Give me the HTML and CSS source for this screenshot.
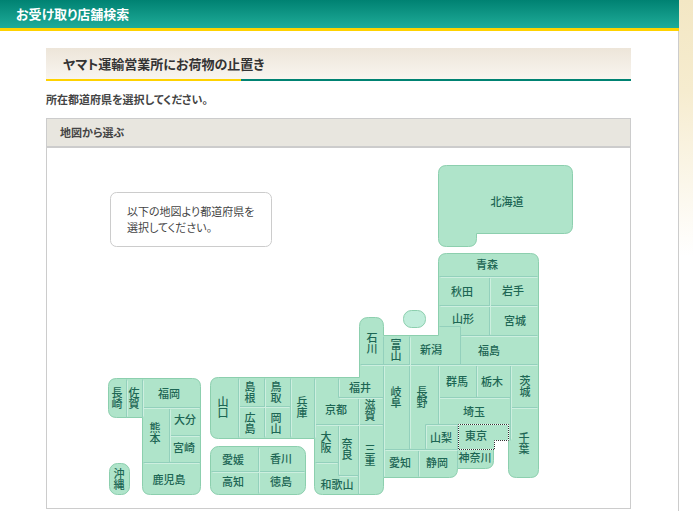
FILE: index.html
```html
<!DOCTYPE html>
<html lang="ja">
<head>
<meta charset="utf-8">
<meta name="viewport" content="width=device-width, initial-scale=1">
<title>お受け取り店舗検索</title>
<link rel="stylesheet" href="styles.css">
</head>
<body>
<div class="page">
  <header class="site-header"><h1>お受け取り店舗検索</h1></header>
  <main class="content">
    <h2 class="section-title">ヤマト運輸営業所にお荷物の止置き</h2>
    <p class="lead">所在都道府県を選択してください。</p>
    <section class="panel">
      <h3 class="panel-title">地図から選ぶ</h3>
      <div class="panel-body">
        <svg class="map" viewBox="47 148 583 360">
          <g transform="translate(.5 .5)">
            <rect class="note-box" x="110" y="192" width="161" height="54" rx="6"/>
            <g class="land">
              <path d="M446 165H564Q572 165 572 173V225Q572 233 564 233H476V238Q476 246 468 246H446Q438 246 438 238V173Q438 165 446 165Z"/>
              <path d="M446 253H530Q538 253 538 261V469Q538 477 530 477H516Q508 477 508 469V440H493V460Q493 468 485 468H457Q457 477 449 477H383V486Q383 494 375 494H322Q314 494 314 486V438H218Q210 438 210 430V385Q210 377 218 377H359V326Q359 317 368 317H375Q383 317 383 326V335H438V261Q438 253 446 253Z"/>
              <rect x="210" y="446" width="95" height="48" rx="8"/>
              <path d="M116 378H192Q200 378 200 386V486Q200 494 192 494H150Q142 494 142 486V417H116Q108 417 108 409V386Q108 378 116 378Z"/>
              <rect x="109" y="463" width="20" height="31" rx="8"/>
              <rect class="sado" x="403" y="310" width="22" height="17" rx="8"/>
            </g>
            <path class="border-dark" d="M439 276H537M439 305H537M439 326H460V364M460 335H537M489 277V335M360 364H537M383 336V477M409 336V449M438 365V424M425 449V424H508M384 449H457M457 424V468M418 449V476M476 365V397M438 397H510M510 365V440M510 407H537M338 378V397H383M358 397V494M314 378V438M315 424H383M338 424V475M315 462H338M338 475H358M238 378V437M264 378V437M290 378V437M238 406H290M258 447V493M211 471H304M126 379V417M142 379V417M142 407H200M169 407V462M169 435H200M143 462H200"/>
            <path class="border-light" d="M440 277H537M440 306H537M461 336H537M490 278V334M361 365H537M384 366V476M410 337V448M439 366V423M426 448V425H457M385 450H457M419 451V476M477 366V396M439 398H509M511 366V439M511 408H537M339 379V396M339 398H382M359 399V493M315 379V437M316 425H382M339 426V474M316 463H337M339 476H357M239 379V436M265 379V436M291 379V436M239 407H289M259 448V492M212 472H304M127 380V416M143 380V416M143 408H199M170 409V461M170 436H199M144 463H199"/>
            <path class="tokyo-base" d="M458 424H508V440H494V449H458Z"/>
            <path class="tokyo-focus" d="M458 424H508V440H494V449H458Z"/>
          </g>
          <text class="note" x="127" y="216">以下の地図より都道府県を</text>
          <text class="note" x="127" y="232">選択してください。</text>
          <g class="names">
            <a href="#hokkaido"><text x="507" y="206">北海道</text></a>
            <a href="#aomori"><text x="487" y="269">青森</text></a>
            <a href="#akita"><text x="462" y="296">秋田</text></a>
            <a href="#iwate"><text x="513" y="295">岩手</text></a>
            <a href="#yamagata"><text x="463" y="323">山形</text></a>
            <a href="#miyagi"><text x="515" y="325">宮城</text></a>
            <a href="#niigata"><text x="431" y="354">新潟</text></a>
            <a href="#fukushima"><text x="489" y="355">福島</text></a>
            <a href="#ishikawa"><text class="tall" x="372" y="343">石川</text></a>
            <a href="#toyama"><text class="tall" x="396" y="350">富山</text></a>
            <a href="#gunma"><text x="457" y="386">群馬</text></a>
            <a href="#tochigi"><text x="492" y="386">栃木</text></a>
            <a href="#ibaraki"><text class="tall" x="525" y="386">茨城</text></a>
            <a href="#gifu"><text class="tall" x="396" y="397">岐阜</text></a>
            <a href="#nagano"><text class="tall" x="422" y="397">長野</text></a>
            <a href="#saitama"><text x="474" y="416">埼玉</text></a>
            <a href="#yamanashi"><text x="441" y="442">山梨</text></a>
            <a href="#tokyo"><text x="476" y="440">東京</text></a>
            <a href="#chiba"><text class="tall" x="524" y="443">千葉</text></a>
            <a href="#kanagawa"><text x="475" y="462">神奈川</text></a>
            <a href="#aichi"><text x="400" y="467">愛知</text></a>
            <a href="#shizuoka"><text x="437" y="467">静岡</text></a>
            <a href="#fukui"><text x="360" y="392">福井</text></a>
            <a href="#shiga"><text class="tall" x="370" y="410">滋賀</text></a>
            <a href="#mie"><text class="tall" x="370" y="455">三重</text></a>
            <a href="#kyoto"><text x="336" y="414">京都</text></a>
            <a href="#osaka"><text class="tall" x="326" y="442">大阪</text></a>
            <a href="#nara"><text class="tall" x="347" y="449">奈良</text></a>
            <a href="#wakayama"><text x="337" y="489">和歌山</text></a>
            <a href="#hyogo"><text class="tall" x="302" y="407">兵庫</text></a>
            <a href="#shimane"><text class="tall" x="250" y="392">島根</text></a>
            <a href="#tottori"><text class="tall" x="276" y="392">鳥取</text></a>
            <a href="#hiroshima"><text class="tall" x="250" y="423">広島</text></a>
            <a href="#okayama"><text class="tall" x="276" y="423">岡山</text></a>
            <a href="#yamaguchi"><text class="tall" x="223" y="407">山口</text></a>
            <a href="#ehime"><text x="233" y="464">愛媛</text></a>
            <a href="#kagawa"><text x="281" y="463">香川</text></a>
            <a href="#kochi"><text x="233" y="486">高知</text></a>
            <a href="#tokushima"><text x="281" y="486">徳島</text></a>
            <a href="#nagasaki"><text class="tall" x="117" y="398">長崎</text></a>
            <a href="#saga"><text class="tall" x="134" y="398">佐賀</text></a>
            <a href="#fukuoka"><text x="169" y="398">福岡</text></a>
            <a href="#oita"><text x="185" y="424">大分</text></a>
            <a href="#miyazaki"><text x="184" y="452">宮崎</text></a>
            <a href="#kumamoto"><text class="tall" x="155" y="433">熊本</text></a>
            <a href="#kagoshima"><text x="169" y="484">鹿児島</text></a>
            <a href="#okinawa"><text class="tall" x="119" y="479">沖縄</text></a>
          </g>
        </svg>
      </div>
    </section>
  </main>
</div>
</body>
</html>
```
FILE: styles.css
```css
* { box-sizing: border-box; }

body {
  margin: 0;
  padding-right: 14px;
  color: #444;
  font-family: "Noto Sans CJK JP", sans-serif;
  font-feature-settings: "palt";
  background: #fff linear-gradient(#f3e7c4, #f6eccf 90px, #fff 256px) no-repeat;
}

h1, h2, h3, p { margin: 0; }

.page {
  min-height: 100vh;
  background: linear-gradient(#ccc, #ccc) right / 1px 100% no-repeat #fff;
}

.site-header {
  padding: 0 16px;
  background: linear-gradient(#008272, #1fac99);
  border-bottom: 3px solid #ffd200;
}

.site-header h1 {
  color: #fff;
  font-size: 13px;
  line-height: 28px;
}

.content { padding: 17px 48px 0 46px; }

.section-title {
  padding: 0 17px 2px;
  color: #333;
  font-size: 13px;
  line-height: 31px;
  background:
    linear-gradient(90deg, #ffd200 33.33%, #008272 33.33%) bottom / 100% 2px no-repeat,
    linear-gradient(#ede5d9, #f9f6f1);
}

.lead {
  padding: 10px 0 11px;
  font-size: 11px;
  font-weight: bold;
  line-height: 16px;
}

.panel { border: 1px solid #ccc; }

.panel-title {
  padding: 0 13px;
  font-size: 11px;
  line-height: 27px;
  background: #e8e6df;
  border-bottom: 2px solid #ccc;
}

.map {
  display: block;
  width: 583px;
  max-width: 100%;
  height: auto;
  margin: 0 auto;
  font-size: 11px;
}

.note-box { fill: #fff; stroke: #ccc; }
.note { fill: #444; }

.land { fill: #afe4ca; stroke: #8ccfae; }
.land .sado { fill: #c0eddb; }

.border-dark, .border-light { fill: none; }
.border-dark { stroke: #93d0bc; }
.border-light { stroke: #cdefdf; }

.tokyo-base { fill: #afe4ca; stroke: #fff; }
.tokyo-focus { fill: none; stroke: #333; stroke-dasharray: 1; stroke-dashoffset: .5; }

.names { fill: #1d6654; font-weight: 500; text-anchor: middle; }
.names .tall { writing-mode: vertical-rl; font-feature-settings: normal; }
.names a { text-decoration: none; }
.names a:hover { fill: #008272; }
```
